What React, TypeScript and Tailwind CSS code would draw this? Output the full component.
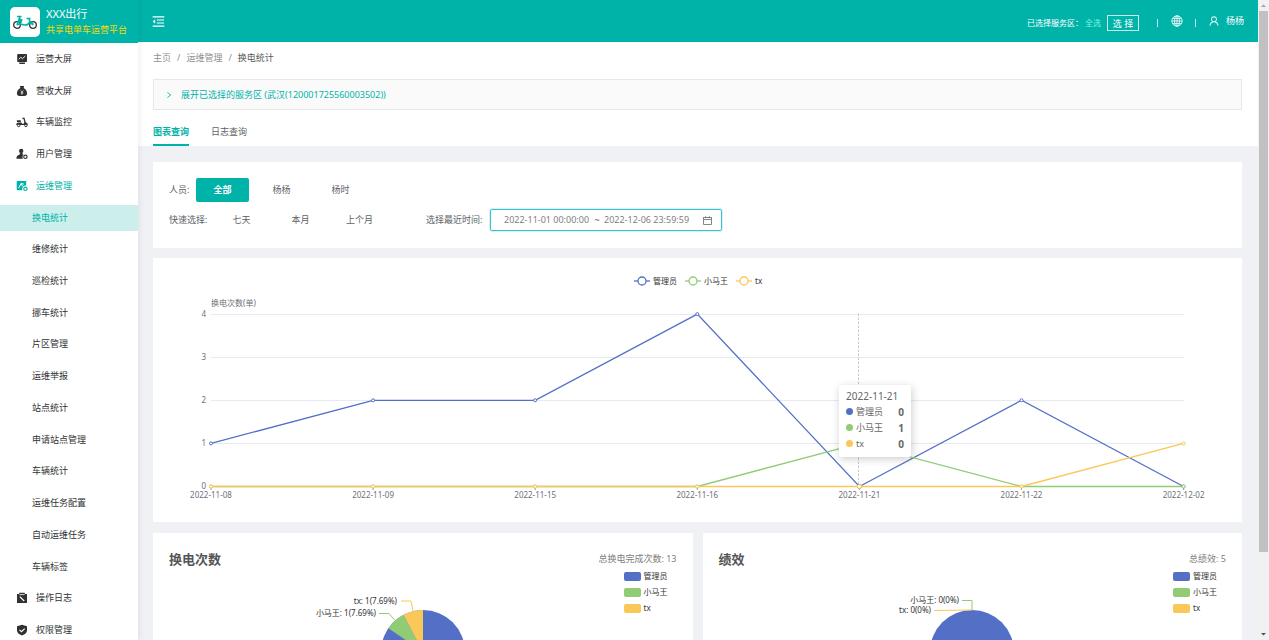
import type { ReactNode } from "react";
import {
  AiOutlineCalendar,
  AiOutlineMenuFold,
  AiOutlineRight,
  AiOutlineUser,
} from "react-icons/ai";

const BLUE = "#5470c6";
const GREEN = "#91cc75";
const YELLOW = "#fac858";

const series = [
  { name: "管理员", color: BLUE, values: [1, 2, 2, 4, 0, 2, 0] },
  { name: "小马王", color: GREEN, values: [0, 0, 0, 0, 1, 0, 0] },
  { name: "tx", color: YELLOW, values: [0, 0, 0, 0, 0, 0, 1] },
];

const dates = [
  "2022-11-08",
  "2022-11-09",
  "2022-11-15",
  "2022-11-16",
  "2022-11-21",
  "2022-11-22",
  "2022-12-02",
];

function ScreenIcon() {
  return (
    <svg viewBox="0 0 12 12" className="size-3" aria-hidden="true">
      <path fill="currentColor" d="M2 .9h8.200a.8.800 0 0 1 .8.800v6.600a.8.800 0 0 1-.8.800H2a.8.800 0 0 1-.8-.8V1.700A.8.800 0 0 1 2 .9zM3 9.400h6.200l-.5 1.500H3.500z" />
      <path fill="none" stroke="#fff" strokeWidth=".9" d="M2.800 6.300l2-2 1.700 1.300 2.800-2.600" />
    </svg>
  );
}

function MoneyIcon() {
  return (
    <svg viewBox="0 0 12 12" className="size-3" aria-hidden="true">
      <path fill="currentColor" d="M3.800.9h4.400L7.600 2.900c2.200.9 3.500 3.400 3.500 5.700C11.100 10.200 10 11 8.500 11h-5C2 11 .9 10.200.9 8.600c0-2.300 1.300-4.800 3.500-5.700z" />
      <path fill="none" stroke="#fff" strokeWidth=".8" d="M4.700 5.400L6 6.800l1.300-1.400M6 6.800v2.900M4.700 7.900h2.600" />
    </svg>
  );
}

function ScooterIcon() {
  return (
    <svg viewBox="0 0 12 12" className="size-3" aria-hidden="true">
      <path fill="currentColor" d="M.9 4.200h3.900v1.900H.9zM.2 9.300c0-1.900.9-2.800 2.300-2.800h2.900l.9 1.200h1.400L8.300 6 7.500 2.900H6.400V1.800h2.100l1.300 4.700c1.300.2 2 1.200 2 2.600H.2z" />
      <circle cx="2.700" cy="9.500" r="1.200" fill="#fff" stroke="currentColor" />
      <circle cx="9.900" cy="9.500" r="1.200" fill="#fff" stroke="currentColor" />
    </svg>
  );
}

function UserGearIcon() {
  return (
    <svg viewBox="0 0 12 12" className="size-3" aria-hidden="true">
      <circle cx="5.200" cy="2.900" r="2.200" fill="currentColor" />
      <path fill="currentColor" d="M4 5h2.400l.3 1.400.9.400C6.600 7.600 6.200 8.900 6.900 10.800H.4c0-2.500.9-3.600 3.300-4.400z" />
      <circle cx="9.400" cy="8.800" r="1.700" fill="none" stroke="currentColor" strokeWidth="1.100" />
    </svg>
  );
}

function OpsIcon() {
  return (
    <svg viewBox="0 0 12 12" className="size-3" aria-hidden="true">
      <path fill="currentColor" d="M1.400 1h8.800v4.800a3.100 3.100 0 0 0-3.700 4.400H1.400a.7.700 0 0 1-.7-.7V1.700a.7.700 0 0 1 .7-.7z" />
      <path fill="none" stroke="#fff" strokeWidth="1" d="M2.600 8.200L5 3.600l1.500 2.600M5 3.400l2.800.8" />
      <circle cx="9.400" cy="8.800" r="1.700" fill="none" stroke="currentColor" strokeWidth="1.100" />
    </svg>
  );
}

function LogIcon() {
  return (
    <svg viewBox="0 0 12 12" className="size-3" aria-hidden="true">
      <path fill="currentColor" d="M1 2h2.200V.8h5.600V2H11v9H1z" />
      <path fill="none" stroke="#fff" strokeWidth=".8" d="M3.400 2.600h5.200" />
      <path fill="none" stroke="#fff" strokeWidth="1.200" d="M3.800 4.600l4.400 4.400" />
    </svg>
  );
}

function ShieldIcon() {
  return (
    <svg viewBox="0 0 12 12" className="size-3" aria-hidden="true">
      <path fill="currentColor" d="M6 .7l5 1.600v4.200c0 2.300-2 3.800-5 5-3-1.200-5-2.700-5-5V2.300z" />
      <path fill="none" stroke="#fff" strokeWidth="1.100" d="M3.500 5.800l2 1.900 3.200-3.100" />
    </svg>
  );
}

function GlobeIcon() {
  return (
    <svg viewBox="0 0 12 12" className="size-3" fill="none" stroke="currentColor" strokeWidth=".8" aria-hidden="true">
      <circle cx="6" cy="6" r="5.200" />
      <ellipse cx="6" cy="6" rx="2.400" ry="5.200" />
      <path d="M6 .8v10.400M.8 6h10.400M1.500 3.400h9M1.500 8.600h9" />
    </svg>
  );
}

type Item = { label: string; icon?: ReactNode; state?: "open" | "current" };

const menu: Item[] = [
  { label: "运营大屏", icon: <ScreenIcon /> },
  { label: "营收大屏", icon: <MoneyIcon /> },
  { label: "车辆监控", icon: <ScooterIcon /> },
  { label: "用户管理", icon: <UserGearIcon /> },
  { label: "运维管理", icon: <OpsIcon />, state: "open" },
  { label: "换电统计", state: "current" },
  { label: "维修统计" },
  { label: "巡检统计" },
  { label: "挪车统计" },
  { label: "片区管理" },
  { label: "运维举报" },
  { label: "站点统计" },
  { label: "申请站点管理" },
  { label: "车辆统计" },
  { label: "运维任务配置" },
  { label: "自动运维任务" },
  { label: "车辆标签" },
  { label: "操作日志", icon: <LogIcon /> },
  { label: "权限管理", icon: <ShieldIcon /> },
];

function MenuLink({ item }: { item: Item }) {
  const tone =
    item.state === "current"
      ? "bg-[#ccefec] text-[#00b3a9]"
      : item.state === "open"
        ? "text-[#00b3a9]"
        : "text-[#303133]";
  return (
    <li className="flex items-center">
      <a
        href="#"
        aria-current={item.state === "current" ? "page" : undefined}
        className={`flex h-[26px] w-full items-center gap-2 ${item.icon ? "pl-4" : "pl-8"} ${tone}`}
      >
        {item.icon}
        {item.label}
      </a>
    </li>
  );
}

function Logo() {
  return (
    <span className="flex size-[30px] shrink-0 items-center justify-center rounded-[5px] bg-white">
      <svg viewBox="0 0 26 16" className="h-4 w-[26px]" fill="none" aria-hidden="true">
        <circle cx="5" cy="11" r="3.300" stroke="#333" strokeWidth="1.300" />
        <circle cx="21" cy="11" r="3.300" stroke="#333" strokeWidth="1.300" />
        <path
          d="M5 2.500h4.500M8 2.500L5 11M8 4.500v3c0 2.500 2 3.500 5 3.500 2.500 0 4-1 4.500-3h3M9.500 5c.5 3-1 5-4.500 6M14.500 4.500h4M17 4.500l1 3.500 3 3M19.500 8.500l2 2"
          stroke="#00b3a9"
          strokeWidth="1.600"
        />
      </svg>
    </span>
  );
}

function Sidebar() {
  return (
    <aside className="z-10 flex w-[138px] shrink-0 flex-col bg-white shadow-[2px_0_6px_rgba(0,21,41,0.06)]">
      <div className="flex h-[43px] shrink-0 items-center gap-1.5 bg-[#00b3a9] pl-2.5">
        <Logo />
        <div className="whitespace-nowrap">
          <p className="text-[11px] leading-4 text-white">XXX出行</p>
          <p className="text-[9px] leading-4 text-[#f5d90a]">共享电单车运营平台</p>
        </div>
      </div>
      <nav aria-label="主菜单">
        <ul className="grid min-h-[603px] auto-rows-fr">
          {menu.map((item) => (
            <MenuLink key={item.label} item={item} />
          ))}
        </ul>
      </nav>
    </aside>
  );
}

function Header() {
  return (
    <header className="flex h-[42px] shrink-0 items-center justify-between bg-[#00b3a9] pr-3.5 pl-[13px] text-white">
      <button type="button" aria-label="收起菜单">
        <AiOutlineMenuFold className="size-[15px]" />
      </button>
      <div className="flex items-center">
        <div className="flex items-center pt-1">
          <span className="text-[8px]">已选择服务区：</span>
          <span className="ml-0.5 text-[8px] text-[#7df5e0]">全选</span>
          <button type="button" className="ml-1.5 h-4 w-8 border border-white/80 leading-none">
            选 择
          </button>
          <span className="ml-[18px] h-2 w-px bg-white/80" />
        </div>
        <button type="button" aria-label="语言" className="ml-[13px]">
          <GlobeIcon />
        </button>
        <span className="mt-1 ml-3 h-2 w-px bg-white/80" />
        <button type="button" className="ml-3 flex items-center gap-1.5">
          <AiOutlineUser className="size-3" />
          杨杨
        </button>
      </div>
    </header>
  );
}

function Intro() {
  return (
    <section className="shrink-0 bg-white pr-4 pl-[15px]">
      <nav aria-label="面包屑" className="flex h-8 items-center gap-1.5 text-[#909090]">
        <a href="#">主页</a>
        <span>/</span>
        <a href="#">运维管理</a>
        <span>/</span>
        <span className="text-[#595959]">换电统计</span>
      </nav>
      <button
        type="button"
        className="mt-[5px] flex h-[31px] w-full items-center gap-2 border border-[#e8e8e8] bg-[#fafafa] pl-[11px] text-[#00b3a9]"
      >
        <AiOutlineRight className="size-2" />
        展开已选择的服务区 (武汉(120001725560003502))
      </button>
      <div role="tablist" className="mt-2.5 flex h-[26px] gap-[22px]">
        <button
          type="button"
          role="tab"
          aria-selected="true"
          className="border-b-2 border-[#00b3a9] font-bold text-[#00b3a9]"
        >
          图表查询
        </button>
        <button type="button" role="tab" aria-selected="false" className="border-b-2 border-transparent text-[#606266]">
          日志查询
        </button>
      </div>
    </section>
  );
}

function Choice({ label, active }: { label: string; active?: boolean }) {
  return (
    <button
      type="button"
      aria-pressed={active ? "true" : "false"}
      className={`h-6 w-[53px] rounded-[2px] ${active ? "bg-[#00b3a9] font-bold text-white" : ""}`}
    >
      {label}
    </button>
  );
}

function Filters() {
  return (
    <section className="flex flex-col gap-1.5 bg-white px-4 pt-4 pb-4 text-[#606266]">
      <div className="flex items-center gap-1.5">
        <span className="w-[21px] whitespace-nowrap">人员:</span>
        <Choice label="全部" active />
        <Choice label="杨杨" />
        <Choice label="杨时" />
      </div>
      <div className="flex items-center gap-1.5">
        <span className="w-10 whitespace-nowrap">快速选择:</span>
        <Choice label="七天" />
        <Choice label="本月" />
        <Choice label="上个月" />
        <label htmlFor="range-start" className="ml-[34px] w-[58px] whitespace-nowrap">
          选择最近时间:
        </label>
        <div className="flex h-[22px] w-[232px] items-center rounded-[2px] border border-[#3cc3cd] pr-2 pl-[13px] shadow-[0_0_0_1px_#d4f2f5]">
          <input
            id="range-start"
            defaultValue="2022-11-01 00:00:00"
            className="w-[86px] bg-transparent text-[#808080] outline-none"
          />
          <span className="w-3.5 text-center">~</span>
          <input
            aria-label="结束时间"
            defaultValue="2022-12-06 23:59:59"
            className="w-[87px] bg-transparent text-[#808080] outline-none"
          />
          <AiOutlineCalendar className="ml-auto size-[11px] text-[#606266]" />
        </div>
      </div>
    </section>
  );
}

const px = (i: number) => 58 + i * 162.1;
const py = (v: number) => 228.5 - v * 43.1;

function LineChart() {
  return (
    <section className="relative bg-white">
      <svg viewBox="0 0 1089 264" className="block w-full text-[8px]" role="img" aria-label="换电次数折线图">
        {series.map((s, i) => (
          <g key={s.name} transform={`translate(${481 + i * 51} 23)`}>
            <path d="M0 0h16" stroke={s.color} strokeWidth="1.300" />
            <circle cx="8" cy="0" r="4" fill="#fff" stroke={s.color} strokeWidth="1.300" />
            <text x="19" y="3" fill="#333">
              {s.name}
            </text>
          </g>
        ))}
        <text x="58" y="48" fill="#6e7079">
          换电次数(单)
        </text>
        {[0, 1, 2, 3, 4].map((v) => (
          <g key={v}>
            <path d={`M58 ${Math.floor(py(v)) + 0.5}H1031`} stroke="#e6eaf2" />
            <text x="53" y={py(v) + 2.5} textAnchor="end" fill="#6e7079">
              {v}
            </text>
          </g>
        ))}
        {dates.map((d, i) => (
          <g key={d}>
            <path d={`M${px(i)} 229v3`} stroke="#6e7079" strokeWidth=".7" />
            <text x={px(i)} y="240" textAnchor="middle" fill="#6e7079">
              {d}
            </text>
          </g>
        ))}
        <path d="M705.500 55.500V228" stroke="#bbb" strokeWidth=".8" strokeDasharray="2.500 1.500" />
        {series.map((s) => (
          <g key={s.name} stroke={s.color} strokeWidth="1.300" fill="none">
            <path d={"M" + s.values.map((v, i) => `${px(i)} ${py(v)}`).join("L")} />
            {s.values.map((v, i) => (
              <circle key={dates[i]} cx={px(i)} cy={py(v)} r={i === 4 ? 2 : 1.5} fill="#fff" strokeWidth="1" />
            ))}
          </g>
        ))}
      </svg>
      <div
        role="tooltip"
        className="absolute top-[48%] left-[63%] w-[72px] rounded-[2px] bg-white px-[7px] pt-[3px] pb-[5px] text-[10px] leading-4 text-[#666] shadow-[1px_2px_8px_rgba(0,0,0,0.2)]"
      >
        <p className="whitespace-nowrap">2022-11-21</p>
        {series.map((s) => (
          <p key={s.name} className="flex items-center gap-[3px]">
            <span className="size-[7px] rounded-full" style={{ background: s.color }} />
            <span className="text-[9px]">{s.name}</span>
            <b className="ml-auto">{s.values[4]}</b>
          </p>
        ))}
      </div>
    </section>
  );
}

function PieCard({ title, total, children }: { title: string; total: string; children: ReactNode }) {
  return (
    <section className="bg-white pt-[17px] pb-4">
      <div className="flex h-[18px] items-center justify-between px-4">
        <h2 className="text-[13px] font-bold text-[#555]">{title}</h2>
        <span className="text-[#808080]">{total}</span>
      </div>
      <div className="grid grid-cols-[1fr_auto_1fr]">
        <svg viewBox="0 0 220 140" className="col-start-2 w-[220px] text-[8px]" role="img" aria-label={title}>
          {children}
        </svg>
        <ul className="mr-[25px] justify-self-end text-[8px] leading-4 text-[#333]">
          {series.map((s) => (
            <li key={s.name} className="flex items-center gap-[3px]">
              <span className="h-[9px] w-[17px] rounded-[2px]" style={{ background: s.color }} />
              {s.name}
            </li>
          ))}
        </ul>
      </div>
    </section>
  );
}

function Scrollbar() {
  return (
    <div aria-hidden="true" className="flex w-[11px] shrink-0 flex-col bg-[#f1f1f1]">
      <svg viewBox="0 0 11 11" className="size-[11px]">
        <path d="M3 7h5L5.500 4.500z" fill="#a3a3a3" />
      </svg>
      <div className="flex-1 px-px">
        <div className="h-7/8 bg-[#c1c1c1]" />
      </div>
      <svg viewBox="0 0 11 11" className="size-[11px]">
        <path d="M3 4h5L5.500 6.500z" fill="#505050" />
      </svg>
    </div>
  );
}

export default function App() {
  return (
    <div className="flex h-screen overflow-hidden bg-[#eff1f5] font-['Noto_Sans','Noto_Sans_CJK_SC',sans-serif] text-[9px] leading-4">
      <Sidebar />
      <div className="flex min-w-0 flex-1 flex-col">
        <Header />
        <Intro />
        <main className="pt-4 pr-4 pl-[15px]">
          <div className="flex flex-col gap-2.5">
            <Filters />
            <LineChart />
          </div>
          <div className="mt-[11px] grid grid-cols-2 gap-2.5">
            <PieCard title="换电次数" total="总换电完成次数: 13">
              <circle cx="110" cy="84" r="42" fill={BLUE} />
              <path d="M110 84L75.430 60.150A42 42 0 0 1 90.480 46.810z" fill={GREEN} />
              <path d="M110 84L90.480 46.810A42 42 0 0 1 110 42z" fill={YELLOW} />
              <path d="M88 33h10l2 10" fill="none" stroke={YELLOW} />
              <path d="M66 45.500h10l6 7" fill="none" stroke={GREEN} />
              <text x="84" y="36" textAnchor="end" fill="#333">
                tx: 1(7.69%)
              </text>
              <text x="63" y="48" textAnchor="end" fill="#333">
                小马王: 1(7.69%)
              </text>
            </PieCard>
            <PieCard title="绩效" total="总绩效: 5">
              <circle cx="110" cy="84" r="42" fill={BLUE} />
              <path d="M100 32.500h10V42" fill="none" stroke={GREEN} />
              <path d="M72 42.500L110 42" fill="none" stroke={YELLOW} />
              <text x="97" y="35" textAnchor="end" fill="#333">
                小马王: 0(0%)
              </text>
              <text x="69" y="45" textAnchor="end" fill="#333">
                tx: 0(0%)
              </text>
            </PieCard>
          </div>
        </main>
      </div>
      <Scrollbar />
    </div>
  );
}
